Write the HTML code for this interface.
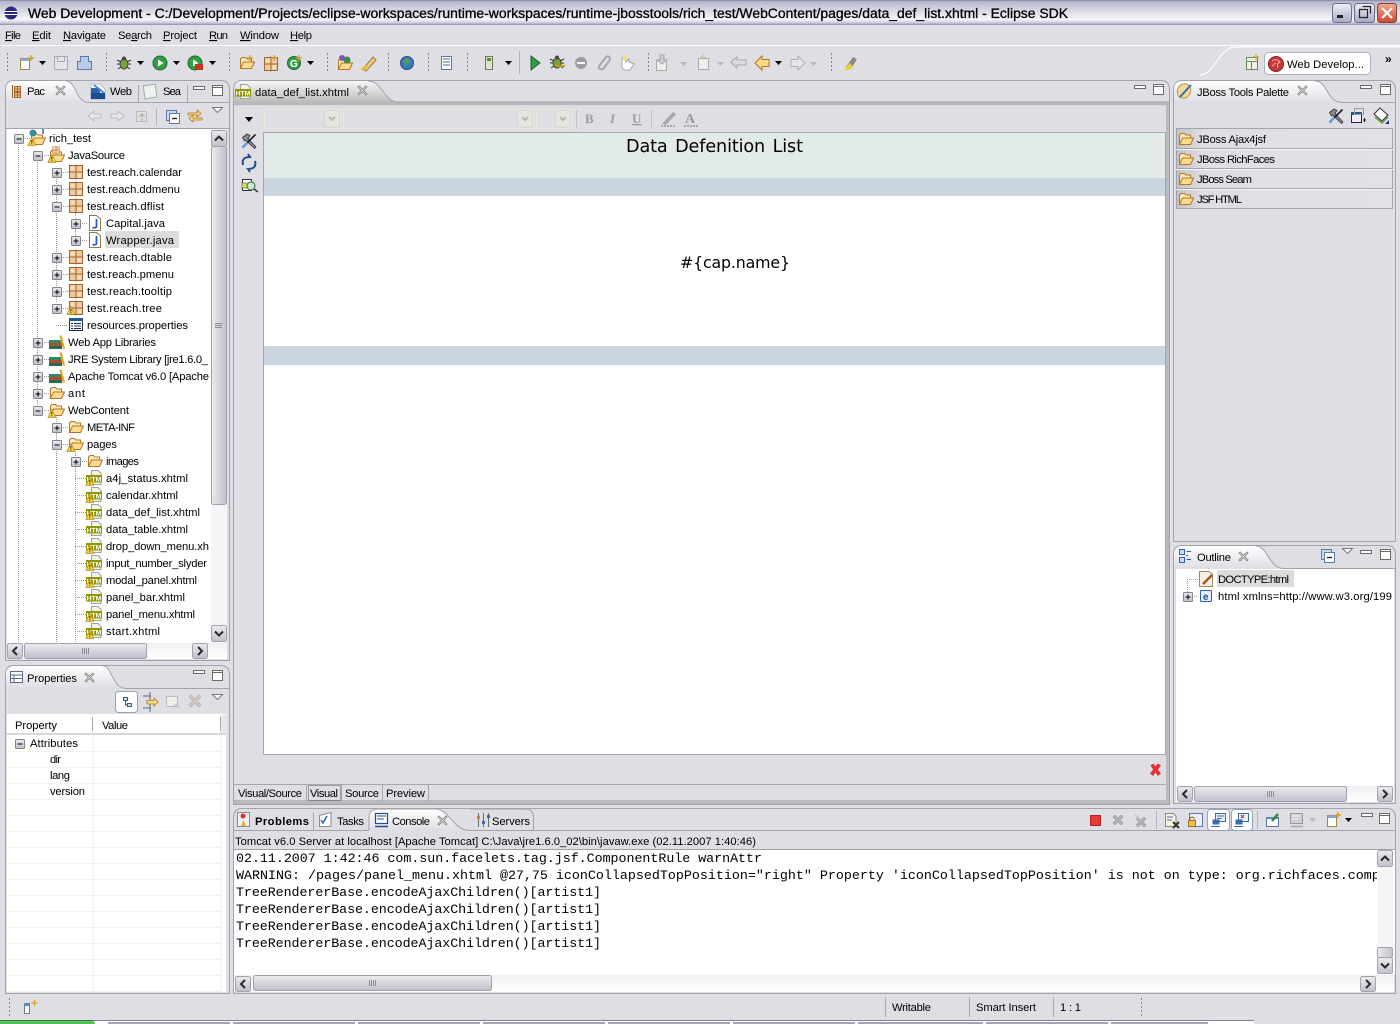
<!DOCTYPE html>
<html><head><meta charset="utf-8"><title>Eclipse SDK</title>
<style>
html,body{margin:0;padding:0;background:#dfdee4;overflow:hidden}
svg{display:block;position:absolute;left:0;top:0}
text{font-family:"Liberation Sans",sans-serif;font-size:11.2px;fill:#000;white-space:pre}
.m{font-family:"Liberation Mono",monospace;font-size:13.33px}
.d{font-family:"DejaVu Sans",sans-serif}
.b{font-weight:bold}
</style></head><body>
<svg width="1400" height="1024" viewBox="0 0 1400 1024">
<defs>
<linearGradient id="gT" x1="0" y1="0" x2="0" y2="1"><stop offset="0" stop-color="#7f7f9f"/><stop offset=".06" stop-color="#b5b5cc"/><stop offset=".3" stop-color="#cdcdde"/><stop offset=".78" stop-color="#f6f6fa"/><stop offset=".92" stop-color="#c8c8da"/><stop offset="1" stop-color="#8e8ea8"/></linearGradient>
<linearGradient id="gA" x1="0" y1="0" x2="0" y2="1"><stop offset="0" stop-color="#fff"/><stop offset="1" stop-color="#dfdee4"/></linearGradient>
<linearGradient id="gE" x1="0" y1="0" x2="0" y2="1"><stop offset="0" stop-color="#f6f6f6"/><stop offset="1" stop-color="#b9b9b9"/></linearGradient>
<linearGradient id="gH" x1="0" y1="0" x2="0" y2="1"><stop offset="0" stop-color="#ecebf0"/><stop offset="1" stop-color="#bfbfcb"/></linearGradient>
<linearGradient id="gV" x1="0" y1="0" x2="1" y2="0"><stop offset="0" stop-color="#ecebf0"/><stop offset="1" stop-color="#bfbfcb"/></linearGradient>
<linearGradient id="gTh" x1="0" y1="0" x2="0" y2="1"><stop offset="0" stop-color="#f0f0f3"/><stop offset="1" stop-color="#fff"/></linearGradient>
<linearGradient id="gP" x1="0" y1="0" x2="1" y2="0"><stop offset="0" stop-color="#c4c4c4"/><stop offset=".12" stop-color="#dfdee4"/><stop offset="1" stop-color="#e2e1e7"/></linearGradient>
<linearGradient id="gW" x1="0" y1="0" x2="0" y2="1"><stop offset="0" stop-color="#f0f0f6"/><stop offset="1" stop-color="#a8a8c4"/></linearGradient>
<linearGradient id="gR" x1="0" y1="0" x2="0" y2="1"><stop offset="0" stop-color="#f0a890"/><stop offset="1" stop-color="#d04830"/></linearGradient>

<g id="ep"><rect x=".5" y=".5" width="9" height="9" rx="1" fill="url(#gH)" stroke="#7f8590"/><path d="M2.500 5H7.500M5 2.500V7.500" stroke="#000" fill="none"/></g>
<g id="em"><rect x=".5" y=".5" width="9" height="9" rx="1" fill="url(#gH)" stroke="#7f8590"/><path d="M2.500 5H7.500" stroke="#000" fill="none"/></g>
<g id="warn"><path d="M3.800 0.500L7.800 8.300H0Z" fill="#ffd84a" stroke="#b08a10" stroke-width=".8"/><path d="M3.800 3V5.500M3.800 6.300V7.300" stroke="#222" fill="none"/></g>
<g id="pkg"><rect x="1.500" y="1.500" width="13" height="13" fill="#ecca9f" stroke="#a8642f"/><path d="M8 .5V15.500M.5 8H15.500" stroke="#a8642f" fill="none"/><path d="M3 3H6.500V6.500H3ZM9.500 9.500H13V13H9.500Z" fill="#f5ddbd"/></g>
<g id="fold"><path d="M1.500 13.500V4L3 2.500H6.500L8 4H12.500V6.500" fill="#fdeab8" stroke="#b5752a"/><path d="M1.500 13.500L4.500 7H15.500L12.500 13.500Z" fill="#fddc90" stroke="#b5752a"/></g>
<g id="htm"><path d="M5.500 .5H12L15 3.500V14.500H5.500Z" fill="#f4f4ee" stroke="#a0a0a0"/><rect x="0" y="5" width="16" height="7.500" fill="#8f9600"/><text x="8" y="11.300" text-anchor="middle" class="b" style="font-size:6.800px;fill:#fff">HTM</text></g>
<g id="java"><path d="M2.500 .5H9.500L13.500 4V15.500H2.500Z" fill="#fff" stroke="#8f7a50"/><path d="M9.500 4V11.500Q9.500 13 5.500 12.800" stroke="#2a60b8" stroke-width="1.800" fill="none"/></g>
<g id="lib"><rect x="0" y="6" width="13" height="3" fill="#2f8a68"/><rect x="0" y="9" width="13" height="3" fill="#a8502f"/><rect x="0" y="12" width="13" height="3" fill="#2a6a50"/><path d="M11.500 1.500L15 14.500" stroke="#e8a820" stroke-width="2.200" fill="none"/></g>
<g id="props"><rect x="1.500" y="1.500" width="13" height="12" fill="#fff" stroke="#1c2c48"/><rect x="1" y="1" width="14" height="3" fill="#24588e"/><path d="M3 6.500H5M6 6.500H13M3 9H5M6 9H13M3 11.500H5M6 11.500H13" stroke="#1c2c48" fill="none"/></g>
<g id="x"><path d="M1 2L2 1L5.500 4.500L9 1L10 2L6.500 5.500L10 9L9 10L5.500 6.500L2 10L1 9L4.500 5.500Z" fill="#fbfbfb" stroke="#8a8a8a" stroke-width=".9"/></g>
<g id="mn"><rect x=".5" y=".5" width="11" height="3" fill="#fff" stroke="#6a6a6a"/></g>
<g id="mx"><rect x=".5" y=".5" width="10" height="10" fill="#fff" stroke="#6a6a6a"/><path d="M.5 2.500H10.500" stroke="#6a6a6a"/></g>
<g id="vm"><path d="M.5 .5H10.500L5.500 5.500Z" fill="#fff" stroke="#7a7a7a"/></g>
<g id="arr"><path d="M0 0H7L3.500 4Z" fill="#000"/></g>
<g id="arg"><path d="M0 0H7L3.500 4Z" fill="#b8b8b8"/></g>
<g id="grip"><path d="M.5 0V20" stroke="#8a8678" stroke-dasharray="2 2" fill="none"/></g>
<g id="bU"><rect x=".5" y=".5" width="15" height="16" rx="2" fill="url(#gH)" stroke="#a2a2ae"/><path d="M4 10.500L8 6.500L12 10.500" stroke="#2a2a2a" stroke-width="2" fill="none"/></g>
<g id="bD"><rect x=".5" y=".5" width="15" height="16" rx="2" fill="url(#gH)" stroke="#a2a2ae"/><path d="M4 6.500L8 10.500L12 6.500" stroke="#2a2a2a" stroke-width="2" fill="none"/></g>
<g id="bL"><rect x=".5" y=".5" width="15" height="15" rx="2" fill="url(#gH)" stroke="#a2a2ae"/><path d="M10 4L6 8L10 12" stroke="#2a2a2a" stroke-width="2" fill="none"/></g>
<g id="bR"><rect x=".5" y=".5" width="15" height="15" rx="2" fill="url(#gH)" stroke="#a2a2ae"/><path d="M6 4L10 8L6 12" stroke="#2a2a2a" stroke-width="2" fill="none"/></g>
<g id="hg"><path d="M.5 0V6M2.500 0V6M4.500 0V6M6.500 0V6" stroke="#8a8a98" fill="none"/></g>
<g id="tools"><path d="M1.500 4.500L6 1L9 2.500L7 5.500L15 14L13.500 15.500L5 7.500L3.500 8Z" fill="#8a8a8e" stroke="#333" stroke-width=".8"/><path d="M14.500 1.500L6 10" stroke="#1a1a2a" stroke-width="1.600" fill="none"/><path d="M6.500 9.500L1.500 14.500" stroke="#5a9ad8" stroke-width="2.400" fill="none"/></g>
<g id="newf"><path d="M2.500 3.500H11.500V14.500H2.500Z" fill="#fff" stroke="#a08838"/><rect x="2.500" y="3.500" width="9" height="2.500" fill="#88a8d8"/><path d="M13 0V6M10 3H16" stroke="#d8a020" stroke-width="1.400" fill="none"/></g>
<g id="play"><circle cx="8" cy="8" r="7" fill="#30a040" stroke="#1a6a28"/><path d="M6 4.500L11.500 8L6 11.500Z" fill="#fff"/></g>
<g id="bug"><ellipse cx="8" cy="9" rx="4" ry="5" fill="#7aa040" stroke="#3c5a20"/><path d="M1 5L5 7M15 5L11 7M1 9H4M15 9H12M2 14L5 12M14 14L11 12" stroke="#333" fill="none"/><circle cx="8" cy="3.500" r="2" fill="#444"/></g>
</defs>

<!-- base -->
<rect width="1400" height="1024" fill="#dfdee4"/>
<rect width="1400" height="25" fill="url(#gT)"/>
<rect y="45" width="1400" height="1" fill="#fff"/>
<path d="M1200 75C1216 74 1218 47 1236 47H1400" fill="none" stroke="#fff" stroke-width="1.200"/>

<!-- title -->
<circle cx="11" cy="13" r="6.500" fill="#2c2a78"/><path d="M4.500 11.500H17.500M4.500 14.500H17.500" stroke="#fff"/>
<text x="28" y="18" textLength="1040" lengthAdjust="spacingAndGlyphs" style="font-size:13.5px;stroke:#000;stroke-width:.3">Web Development - C:/Development/Projects/eclipse-workspaces/runtime-workspaces/runtime-jbosstools/rich_test/WebContent/pages/data_def_list.xhtml - Eclipse SDK</text>
<rect x="1332.500" y="3.500" width="19" height="19" rx="3" fill="url(#gW)" stroke="#6e6e8c"/><rect x="1337" y="15" width="6" height="3" fill="#222"/>
<rect x="1354.500" y="3.500" width="20" height="19" rx="3" fill="url(#gW)" stroke="#6e6e8c"/><path d="M1362.500 6.500H1370.500V13.500M1359.500 9.500H1367.500V17.500H1359.500Z" fill="none" stroke="#222" stroke-width="1.200"/>
<rect x="1377.500" y="3.500" width="19" height="19" rx="3" fill="url(#gR)" stroke="#8a4030"/><path d="M1382 8L1392 18M1392 8L1382 18" stroke="#fff" stroke-width="2"/>

<!-- menu -->
<text x="5" y="39" textLength="16"><tspan text-decoration="underline">F</tspan>ile</text>
<text x="32" y="39" textLength="19"><tspan text-decoration="underline">E</tspan>dit</text>
<text x="63" y="39" textLength="43"><tspan text-decoration="underline">N</tspan>avigate</text>
<text x="118" y="39" textLength="34">Se<tspan text-decoration="underline">a</tspan>rch</text>
<text x="163" y="39" textLength="34"><tspan text-decoration="underline">P</tspan>roject</text>
<text x="209" y="39" textLength="19"><tspan text-decoration="underline">R</tspan>un</text>
<text x="240" y="39" textLength="39"><tspan text-decoration="underline">W</tspan>indow</text>
<text x="290" y="39" textLength="22"><tspan text-decoration="underline">H</tspan>elp</text>

<!-- toolbar -->
<use href="#grip" x="7" y="53"/><use href="#grip" x="106" y="53"/><use href="#grip" x="229" y="53"/><use href="#grip" x="327" y="53"/><use href="#grip" x="388" y="53"/><use href="#grip" x="428" y="53"/><use href="#grip" x="467" y="53"/><use href="#grip" x="648" y="53"/><use href="#grip" x="831" y="53"/>
<path d="M519.500 51V74" stroke="#b0b0b8"/>
<use href="#newf" x="18" y="55"/><use href="#arr" x="39" y="61"/>
<g fill="#e6e6ea" stroke="#a8a8b0"><rect x="54.500" y="56.500" width="13" height="13"/><rect x="57.500" y="56.500" width="7" height="5"/></g>
<path d="M80.500 56.500H88.500V61.500H91.500V69.500H77.500V61.500H80.500Z" fill="#b8cce8" stroke="#5a7aa8"/>
<use href="#bug" x="116" y="55"/><use href="#arr" x="137" y="61"/>
<use href="#play" x="152" y="55"/><use href="#arr" x="173" y="61"/>
<use href="#play" x="187" y="55"/><rect x="195" y="64" width="8" height="6" fill="#c83020"/><use href="#arr" x="209" y="61"/>
<use href="#fold" x="239" y="55"/><path d="M250 55V61M247 58H253" stroke="#d8a020" stroke-width="1.300"/>
<use href="#pkg" x="263" y="56"/><path d="M274 55V61M271 58H277" stroke="#d8a020" stroke-width="1.300"/>
<circle cx="294" cy="63" r="6.500" fill="#38a048" stroke="#1a6a28"/><text x="290" y="67" class="b" style="font-size:10px;fill:#fff">G</text><path d="M299 55V61M296 58H302" stroke="#d8a020" stroke-width="1.300"/><use href="#arr" x="307" y="61"/>
<use href="#fold" x="337" y="56"/><circle cx="347" cy="60" r="3.500" fill="#3a8a4a"/><circle cx="342" cy="58" r="3" fill="#7a5aa8"/>
<path d="M363 69L373 57L376 60L366 71Z" fill="#f0c890" stroke="#a07840"/><path d="M362 70L366 66" stroke="#e0c020" stroke-width="3"/>
<circle cx="407" cy="63" r="6.500" fill="#3a7ac0" stroke="#2a4a80"/><path d="M403 60Q407 57 410 61L406 66Z" fill="#58a048"/>
<path d="M441.500 56.500H451.500V69.500H441.500Z" fill="#fff" stroke="#5a7aa8"/><path d="M443 59H450M443 62H450M443 65H450" stroke="#4a6a98"/>
<rect x="485.500" y="56.500" width="7" height="13" fill="#dce4c8" stroke="#6a7a5a"/><rect x="487" y="58" width="4" height="3" fill="#5a8a3a"/><use href="#arr" x="505" y="61"/>
<path d="M531 56L540 63L531 70Z" fill="#2f9a48" stroke="#1a6a28"/>
<use href="#bug" x="549" y="54"/><path d="M556 66H565" stroke="#c89820" stroke-width="2"/>
<circle cx="581" cy="63" r="6" fill="#9c9ca4"/><rect x="577" y="62" width="8" height="2" fill="#fff"/>
<g fill="none" stroke="#a8a8b0" stroke-width="2"><path d="M599 66L606 57Q610 55 610 60L603 69Q598 70 599 66Z"/></g>
<path d="M622 58V68Q625 71 630 70L634 64L629 62V59L626 62V56Z" fill="#fff" stroke="#a8a8a8"/><circle cx="625" cy="58" r="2.500" fill="#f4e070"/>
<path d="M656.500 60.500H666.500V70.500H656.500Z" fill="#eee" stroke="#aaa"/><path d="M660 55H664V60H667L662 64L657 60H660Z" fill="#ccc" stroke="#aaa"/><use href="#arg" x="680" y="62"/>
<path d="M698.500 58.500H708.500V69.500H698.500Z" fill="#eee" stroke="#aaa"/><path d="M703 54V60M700 57H706" stroke="#c8c8a0"/><use href="#arg" x="717" y="62"/>
<path d="M731 62L737 57V60H746V65H737V68Z" fill="#ddd" stroke="#a8a8a8"/>
<path d="M755 63L762 56V59.500H769V66.500H762V70Z" fill="#fcd88a" stroke="#b07820"/><use href="#arr" x="775" y="61"/>
<path d="M805 63L798 56V59.500H791V66.500H798V70Z" fill="#e6e6e6" stroke="#b0b0b0"/><use href="#arg" x="810" y="62"/>
<path d="M846 67L853 57L857 59L851 69Z" fill="#908878"/><path d="M844 70L850 63L853 67L848 70Z" fill="#f0d030"/>

<!-- perspective -->
<path d="M1246.500 57.500H1257.500V69.500H1246.500ZM1246.500 61.500H1257.500M1251.500 61.500V69.500" fill="#f0f0e0" stroke="#6a8a5a"/><path d="M1256 54V60M1253 57H1259" stroke="#d8a020" stroke-width="1.200"/>
<rect x="1264.500" y="52.500" width="106" height="22" rx="4" fill="#fff" stroke="#a8b4c4"/>
<circle cx="1276" cy="64" r="7.500" fill="#c83838" stroke="#8a2020"/><path d="M1272 61Q1276 58 1280 62Q1276 64 1278 68M1272 66L1276 63" fill="none" stroke="#f0b0b0"/>
<text x="1287" y="68" textLength="77">Web Develop...</text>
<text x="1385" y="63" class="b" style="font-size:12px">»</text>

<!-- left-top panel -->
<path d="M5.500 90Q5.500 80.500 14 80.500H221Q229.500 80.500 229.500 90V660.500H5.500Z" fill="#dfdee4" stroke="#a2a2aa"/>
<path d="M6 102V90Q6 81 14 81H66C76 81 76 102 88 102Z" fill="url(#gA)"/>
<path d="M66 81C76 81 76 102 88 102.500H229" fill="none" stroke="#a2a2aa"/>
<path d="M12.500 85V98" stroke="#8a6030" fill="none"/><path d="M14.500 86.500H20.500V91.500H14.500ZM14.500 92.500H20.500V97.500H14.500ZM14.500 89H20.500M14.500 95H20.500M17.500 86.500V97.500" fill="#ecca9f" stroke="#a8642f"/>
<text x="27" y="95" textLength="18">Pac</text><use href="#x" x="55" y="85"/>
<path d="M91 84H100L105 89V99H91Z" fill="#fff" stroke="#8a98a8" stroke-width=".6"/><rect x="91" y="88" width="9" height="5" fill="#2a66b0"/><rect x="91" y="93" width="14" height="6" fill="#1a4c90"/><path d="M94 85L104 93" stroke="#4a8ad0" stroke-width="2"/>
<text x="110" y="95" textLength="22">Web</text>
<path d="M138.500 85V102" stroke="#a8a8b0"/>
<rect x="144" y="85" width="12" height="13" fill="#eef2ee" stroke="#a0b0a0" transform="rotate(-8 150 91)"/><text x="163" y="95" textLength="18">Sea</text>
<path d="M187.500 85V102" stroke="#a8a8b0"/>
<use href="#mn" x="193" y="86"/><use href="#mx" x="212" y="85"/>
<path d="M88 116L94 111V114H101V118H94V121Z" fill="#e8e8e8" stroke="#bbb"/>
<path d="M124 116L118 111V114H111V118H118V121Z" fill="#e8e8e8" stroke="#bbb"/>
<path d="M136.500 111.500H146.500V121.500H136.500Z" fill="#e0e0e0" stroke="#bbb"/><path d="M139 117L142 114L145 117M142 114V121" stroke="#aaa" fill="none"/>
<path d="M156.500 108V125" stroke="#b4b4bc"/>
<rect x="166.500" y="110.500" width="10" height="10" fill="#c8d8ec" stroke="#5a7aa8"/><rect x="169.500" y="113.500" width="10" height="10" fill="#fff" stroke="#5a7aa8"/><path d="M172 118.500H177" stroke="#223" stroke-width="1.400"/>
<path d="M188 113H197V110L201 113.500L197 117V115H188Z" fill="#fcd88a" stroke="#b07820" stroke-width=".8"/><path d="M202 118H193V115L189 118.500L193 122V120H202Z" fill="#fcd88a" stroke="#b07820" stroke-width=".8"/>
<use href="#vm" x="212" y="107"/>

<rect x="6" y="128" width="223" height="1" fill="#a2a2aa"/>
<rect x="7" y="129" width="204" height="514" fill="#fff"/>
<rect x="105" y="231" width="74" height="17" fill="#dcdcdc"/>
<!-- tree dotted -->
<g stroke="#9a9a9a" stroke-dasharray="1 1" fill="none">
<path d="M18.500 143V642M37.500 160V405M56.500 177V303M75.500 211V236M56.500 415V642M75.500 449V642"/>
<path d="M23 138.500H30M42 155.500H49M61 172.500H68M61 189.500H68M61 206.500H68M80 223.500H87M80 240.500H87M61 257.500H68M61 274.500H68M61 291.500H68M61 308.500H68M56 325.500H68M42 342.500H49M42 359.500H49M42 376.500H49M42 393.500H49M42 410.500H49M61 427.500H68M61 444.500H68M80 461.500H87M75 478.500H87M75 495.500H87M75 512.500H87M75 529.500H87M75 546.500H87M75 563.500H87M75 580.500H87M75 597.500H87M75 614.500H87M75 631.500H87"/>
</g>
<!-- expanders -->
<use href="#em" x="14" y="134"/><use href="#em" x="33" y="151"/>
<use href="#ep" x="52" y="168"/><use href="#ep" x="52" y="185"/><use href="#em" x="52" y="202"/>
<use href="#ep" x="71" y="219"/><use href="#ep" x="71" y="236"/>
<use href="#ep" x="52" y="253"/><use href="#ep" x="52" y="270"/><use href="#ep" x="52" y="287"/><use href="#ep" x="52" y="304"/>
<use href="#ep" x="33" y="338"/><use href="#ep" x="33" y="355"/><use href="#ep" x="33" y="372"/><use href="#ep" x="33" y="389"/><use href="#em" x="33" y="406"/>
<use href="#ep" x="52" y="423"/><use href="#em" x="52" y="440"/><use href="#ep" x="71" y="457"/>
<!-- tree icons -->
<use href="#fold" x="30" y="131"/><circle cx="33" cy="133" r="3.500" fill="#3a8a9a"/><path d="M43 129V134" stroke="#2a60b8" stroke-width="1.500"/><use href="#warn" x="28" y="137"/>
<use href="#fold" x="49" y="148"/><use href="#pkg" x="52" y="146" transform="translate(26,73) scale(.5)"/><use href="#warn" x="48" y="154"/>
<use href="#pkg" x="68" y="164"/><use href="#pkg" x="68" y="181"/><use href="#pkg" x="68" y="198"/>
<use href="#java" x="87" y="215"/><use href="#java" x="87" y="232"/>
<use href="#pkg" x="68" y="249"/><use href="#pkg" x="68" y="266"/><use href="#pkg" x="68" y="283"/><use href="#pkg" x="68" y="300"/><use href="#warn" x="67" y="306"/>
<use href="#props" x="68" y="317"/>
<use href="#lib" x="49" y="334"/><use href="#lib" x="49" y="351"/><use href="#lib" x="49" y="368"/>
<use href="#fold" x="49" y="385"/><use href="#fold" x="49" y="402"/><use href="#warn" x="48" y="409"/>
<use href="#fold" x="68" y="419"/><use href="#fold" x="68" y="436"/><use href="#warn" x="67" y="443"/>
<use href="#fold" x="87" y="453"/>
<use href="#htm" x="86" y="470"/><use href="#warn" x="86" y="477"/>
<use href="#htm" x="86" y="487"/><use href="#warn" x="86" y="494"/>
<use href="#htm" x="86" y="504"/><use href="#warn" x="86" y="511"/>
<use href="#htm" x="86" y="521"/>
<use href="#htm" x="86" y="538"/><use href="#warn" x="86" y="545"/>
<use href="#htm" x="86" y="555"/><use href="#warn" x="86" y="562"/>
<use href="#htm" x="86" y="572"/><use href="#warn" x="86" y="579"/>
<use href="#htm" x="86" y="589"/>
<use href="#htm" x="86" y="606"/><use href="#warn" x="86" y="613"/>
<use href="#htm" x="86" y="623"/><use href="#warn" x="86" y="630"/>
<!-- tree text -->
<text x="49" y="142" textLength="42">rich_test</text>
<text x="68" y="159" textLength="57">JavaSource</text>
<text x="87" y="176" textLength="95">test.reach.calendar</text>
<text x="87" y="193" textLength="93">test.reach.ddmenu</text>
<text x="87" y="210" textLength="77">test.reach.dflist</text>
<text x="106" y="227" textLength="59">Capital.java</text>
<text x="106" y="244" textLength="68">Wrapper.java</text>
<text x="87" y="261" textLength="85">test.reach.dtable</text>
<text x="87" y="278" textLength="87">test.reach.pmenu</text>
<text x="87" y="295" textLength="85">test.reach.tooltip</text>
<text x="87" y="312" textLength="75">test.reach.tree</text>
<text x="87" y="329" textLength="101">resources.properties</text>
<text x="68" y="346" textLength="88">Web App Libraries</text>
<text x="68" y="363" textLength="140">JRE System Library [jre1.6.0_</text>
<text x="68" y="380" textLength="141">Apache Tomcat v6.0 [Apache</text>
<text x="68" y="397" textLength="17">ant</text>
<text x="68" y="414" textLength="61">WebContent</text>
<text x="87" y="431" textLength="48">META-INF</text>
<text x="87" y="448" textLength="30">pages</text>
<text x="106" y="465" textLength="33">images</text>
<text x="106" y="482" textLength="82">a4j_status.xhtml</text>
<text x="106" y="499" textLength="72">calendar.xhtml</text>
<text x="106" y="516" textLength="94">data_def_list.xhtml</text>
<text x="106" y="533" textLength="82">data_table.xhtml</text>
<text x="106" y="550" textLength="103">drop_down_menu.xh</text>
<text x="106" y="567" textLength="101">input_number_slyder</text>
<text x="106" y="584" textLength="91">modal_panel.xhtml</text>
<text x="106" y="601" textLength="79">panel_bar.xhtml</text>
<text x="106" y="618" textLength="89">panel_menu.xhtml</text>
<text x="106" y="635" textLength="54">start.xhtml</text>
<!-- left scrollbars -->
<rect x="209" y="129" width="2" height="514" fill="#fff"/>
<rect x="211" y="129" width="16" height="514" fill="#f5f5f8"/>
<rect x="227" y="129" width="2" height="514" fill="#dfdee4"/>
<use href="#bU" x="211" y="130"/><use href="#bD" x="211" y="625"/>
<rect x="211.500" y="146.500" width="15" height="358" rx="2" fill="url(#gV)" stroke="#a2a2ae"/>
<path d="M215 323.500H222M215 325.500H222M215 327.500H222" stroke="#8a8a98"/>
<rect x="7" y="643" width="220" height="16" fill="url(#gTh)"/>
<use href="#bL" x="7" y="643"/><use href="#bR" x="192" y="643"/>
<rect x="24.500" y="643.500" width="122" height="15" rx="2" fill="url(#gH)" stroke="#a2a2ae"/><use href="#hg" x="82" y="648"/>

<!-- properties -->
<path d="M5.500 675Q5.500 665.500 14 665.500H221Q229.500 665.500 229.500 675V993.500H5.500Z" fill="#dfdee4" stroke="#a2a2aa"/>
<path d="M6 688V675Q6 666 14 666H103C112 666 112 688 126 688Z" fill="url(#gA)"/>
<path d="M103 666C112 666 112 688 126 688.500H229" fill="none" stroke="#a2a2aa"/>
<rect x="10.500" y="671.500" width="12" height="11" fill="#fff" stroke="#5a6a8a"/><path d="M10 675H22M14 675V682M10 678.500H22" stroke="#5a6a8a"/>
<text x="27" y="682" textLength="50">Properties</text><use href="#x" x="84" y="672"/>
<use href="#mn" x="193" y="670"/><use href="#mx" x="212" y="670"/>
<rect x="115.500" y="691.500" width="22" height="21" rx="3" fill="#fff" stroke="#90a4b8"/>
<path d="M123.500 697.500H127.500V700.500H123.500ZM127.500 703.500H131.500V706.500H127.500ZM125.500 700.500V705H127.500" fill="#cde" stroke="#3a5a88"/>
<path d="M143 696H151M143 708H151M150 692V700M150 704V712" stroke="#5a6a7a" fill="none"/><path d="M147 700.500H154V698L158 702L154 706V704H147Z" fill="#fcd88a" stroke="#b07820" stroke-width=".8"/>
<rect x="166.500" y="696.500" width="11" height="10" fill="#eee" stroke="#bbb"/><path d="M172 707L176 704L179 708" stroke="#bbb" fill="none"/>
<path d="M189 697L191 695L195 699L199 695L201 697L197 701L201 705L199 707L195 703L191 707L189 705L193 701Z" fill="#cfc8c8" stroke="#b8a8a8" stroke-width=".7"/>
<use href="#vm" x="212" y="694"/>
<rect x="7" y="714" width="219" height="278" fill="#fff"/>
<rect x="7" y="715" width="215" height="18" fill="#fff"/><rect x="7" y="733" width="219" height="2" fill="#d8d8d8"/>
<rect x="221" y="715" width="6" height="18" fill="#e6e6ea"/>
<path d="M92.500 717V731M220.500 717V731" stroke="#a8a8b0"/>
<text x="15" y="729" textLength="42">Property</text><text x="102" y="729" textLength="26">Value</text>
<g stroke="#f4f4e6" fill="none">
<path d="M93.500 735V992M221.500 735V992"/>
<path d="M7 751.500H221M7 767.500H221M7 783.500H221M7 799.500H221M7 815.500H221M7 831.500H221M7 847.500H221M7 863.500H221M7 879.500H221M7 895.500H221M7 911.500H221M7 927.500H221M7 943.500H221M7 959.500H221M7 975.500H221M7 991.500H221"/>
</g>
<use href="#em" x="15" y="739"/>
<text x="30" y="747" textLength="48">Attributes</text><text x="50" y="763" textLength="11">dir</text><text x="50" y="779" textLength="20">lang</text><text x="50" y="795" textLength="35">version</text>

<!-- editor -->
<path d="M233.500 90Q233.500 80.500 242 80.500H1161Q1169.500 80.500 1169.500 90V804.500H233.500Z" fill="#dfdee4" stroke="#a2a2aa"/>
<path d="M234 103V90Q234 81 242 81H368C382 81 384 102 398 102Z" fill="url(#gE)"/>
<rect x="234" y="102" width="935" height="3" fill="#b9b9b9"/>
<rect x="234" y="105" width="935" height="1" fill="#d8d8dc"/>
<path d="M368 81C382 81 384 102 398 102H1169" fill="none" stroke="#a2a2aa"/>
<use href="#htm" x="235" y="84"/>
<text x="255" y="96" textLength="94">data_def_list.xhtml</text><use href="#x" x="357" y="85"/>
<use href="#mn" x="1134" y="85"/><use href="#mx" x="1153" y="84"/>
<rect x="1166" y="105" width="3" height="699" fill="#b9b9bd"/>
<rect x="234" y="800" width="935" height="4" fill="#b9b9bd"/>
<path d="M245 117H253L249 122Z" fill="#000"/>
<use href="#tools" x="241" y="133"/>
<g fill="none" stroke="#1f4f90" stroke-width="2"><path d="M243 165Q241 157 250 157L248 154"/><path d="M255 161Q257 169 248 169L250 172"/></g>
<rect x="242.500" y="179.500" width="9" height="11" fill="#fff" stroke="#333"/><rect x="242" y="183" width="6" height="5" fill="#e8e030" stroke="#2a60b8" stroke-width=".6"/><circle cx="251" cy="186" r="4" fill="#cfe8c8" stroke="#2a6a60"/><path d="M254 189L258 192" stroke="#333" stroke-width="1.500"/>
<!-- combos -->
<g fill="#dfdee4" stroke="#ece9d8"><rect x="264.500" y="109.500" width="76" height="19"/><rect x="343.500" y="109.500" width="190" height="19"/><rect x="536.500" y="109.500" width="35" height="19"/></g>
<g fill="#e6e5e0" stroke="#d8d6c8"><rect x="324.500" y="110.500" width="15" height="17" rx="2"/><rect x="517.500" y="110.500" width="15" height="17" rx="2"/><rect x="555.500" y="110.500" width="15" height="17" rx="2"/></g>
<path d="M329 117L332 120L335 117M522 117L525 120L528 117M560 117L563 120L566 117" fill="none" stroke="#b8b8b0" stroke-width="2"/>
<path d="M576.500 110V129M651.500 110V129" stroke="#c4c4cc"/>
<text x="585" y="123" class="b" style="font-size:13px;fill:#9a9aa0;font-family:'Liberation Serif',serif">B</text>
<text x="610" y="123" class="b" style="font-size:13px;fill:#9a9aa0;font-style:italic;font-family:'Liberation Serif',serif">I</text>
<text x="632" y="123" class="b" style="font-size:13px;fill:#9a9aa0;font-family:'Liberation Serif',serif" text-decoration="underline">U</text>
<path d="M662 124L673 112L676 114L666 125Z" fill="#a8a8a8"/><path d="M661 126H676" stroke="#a8a8a8" stroke-dasharray="2 1" stroke-width="2"/>
<text x="685" y="123" class="b" style="font-size:14px;fill:#9a9aa0;font-family:'Liberation Serif',serif">A</text><path d="M684 126H698" stroke="#a8a8a8" stroke-dasharray="2 1" stroke-width="2"/>
<!-- design -->
<rect x="263.500" y="132.500" width="902" height="622" fill="#fff" stroke="#a8a8ac"/>
<rect x="264" y="133" width="901" height="45" fill="#e2ebe9"/>
<rect x="264" y="178" width="901" height="18" fill="#c9d5df"/>
<rect x="264" y="346" width="901" height="19" fill="#c9d5df"/>
<text x="714.500" y="152" text-anchor="middle" class="d" textLength="177" style="font-size:17.600px" word-spacing="2">Data Defenition List</text>
<text x="680" y="268" class="d" textLength="110" style="font-size:15.800px">#{cap.name}</text>
<path d="M1151 765.500L1153 764L1155.500 767L1158 764L1160.500 765.500L1157.500 769.500L1160.500 773.500L1158 775.500L1155.500 772L1153 775.500L1150.500 773.500L1153.500 769.500Z" fill="#ee3038" stroke="#d02028" stroke-width=".6"/>
<path d="M234 784.500H1166" stroke="#a8a8ac"/>
<path d="M306.500 785V801M341.500 785V801M382.500 785V801M428.500 785V801" stroke="#a8a8ac"/>
<text x="238" y="797" textLength="64">Visual/Source</text>
<rect x="308.500" y="785.500" width="32" height="15" fill="none" stroke="#555" stroke-dasharray="1 1"/>
<text x="310" y="797" textLength="28">Visual</text><text x="345" y="797" textLength="34">Source</text><text x="386" y="797" textLength="39">Preview</text>

<!-- palette -->
<path d="M1173.500 90Q1173.500 80.500 1182 80.500H1387Q1395.500 80.500 1395.500 90V541.500H1173.500Z" fill="#dfdee4" stroke="#a2a2aa"/>
<path d="M1174 102V90Q1174 81 1182 81H1315C1328 81 1326 102 1342 102Z" fill="url(#gA)"/>
<path d="M1315 81C1328 81 1326 102 1342 102.500H1395" fill="none" stroke="#a2a2aa"/>
<ellipse cx="1184" cy="91" rx="6.500" ry="7.500" fill="#f0d898" stroke="#b89850" transform="rotate(30 1184 91)"/><path d="M1180 97L1191 85" stroke="#3a6ab0" stroke-width="2"/>
<text x="1197" y="96" textLength="92">JBoss Tools Palette</text><use href="#x" x="1297" y="85"/>
<use href="#mn" x="1360" y="85"/><use href="#mx" x="1380" y="84"/>
<use href="#tools" x="1328" y="108"/>
<rect x="1351.500" y="112.500" width="10" height="10" fill="#eef" stroke="#223"/><rect x="1351" y="112" width="11" height="3" fill="#24588e"/><rect x="1354.500" y="108.500" width="9" height="6" fill="none" stroke="#999"/><path d="M1363 120H1366M1364.500 118V122" stroke="#222"/>
<path d="M1374 114L1380 108L1388 115L1382 121Z" fill="#fff" stroke="#2a2a2a"/><path d="M1375 117L1382 123L1388 117" stroke="#6a9a40" stroke-width="1.500" fill="none"/><path d="M1385 124H1389V120Z" fill="#1a30a0"/>
<g stroke="#9a9aa2"><rect x="1176.500" y="128.500" width="216" height="80" fill="#dfdee4"/></g>
<rect x="1177" y="129" width="215" height="79" fill="url(#gP)"/>
<path d="M1176 128.500H1393M1176 148.500H1393M1176 168.500H1393M1176 188.500H1393M1176 208.500H1393M1176.500 128V209M1392.500 128V209" stroke="#a2a2aa"/>
<path d="M1176 149.500H1393M1176 169.500H1393M1176 189.500H1393" stroke="#f6f6f8"/>
<use href="#fold" x="1178" y="131"/><use href="#fold" x="1178" y="151"/><use href="#fold" x="1178" y="171"/><use href="#fold" x="1178" y="191"/>
<text x="1197" y="143" textLength="69">JBoss Ajax4jsf</text><text x="1197" y="163" textLength="78">JBoss RichFaces</text><text x="1197" y="183" textLength="55">JBoss Seam</text><text x="1197" y="203" textLength="45">JSF HTML</text>

<!-- outline -->
<path d="M1173.500 555Q1173.500 545.500 1182 545.500H1387Q1395.500 545.500 1395.500 555V803.500H1173.500Z" fill="#dfdee4" stroke="#a2a2aa"/>
<path d="M1174 568V555Q1174 546 1182 546H1256C1268 546 1268 568 1284 568Z" fill="url(#gA)"/>
<path d="M1256 546C1268 546 1268 568 1284 568.500H1395" fill="none" stroke="#a2a2aa"/>
<path d="M1179.500 549.500H1184.500V554.500H1179.500ZM1179.500 557.500H1184.500V562.500H1179.500ZM1186.500 551.500H1191M1186.500 559.500H1191M1186 555.500H1188" fill="#cde" stroke="#2a60b8"/>
<text x="1197" y="561" textLength="34">Outline</text><use href="#x" x="1238" y="551"/>
<rect x="1321.500" y="549.500" width="10" height="10" fill="#c8d8ec" stroke="#5a7aa8"/><rect x="1324.500" y="552.500" width="10" height="10" fill="#fff" stroke="#5a7aa8"/><path d="M1327 557.500H1332" stroke="#223" stroke-width="1.400"/>
<use href="#vm" x="1342" y="548"/><use href="#mn" x="1360" y="550"/><use href="#mx" x="1380" y="549"/>
<rect x="1176" y="569" width="218" height="233" fill="#fff"/>
<rect x="1217" y="570" width="77" height="17" fill="#dcdcdc"/>
<g stroke="#9a9a9a" stroke-dasharray="1 1" fill="none"><path d="M1187.500 579V592M1187 579.500H1198M1192 596.500H1198"/></g>
<path d="M1199.500 571.500H1209L1212.500 574V586.500H1199.500Z" fill="#f6f0e0" stroke="#a08858"/><path d="M1203 584L1212 575" stroke="#a85020" stroke-width="2.500"/>
<use href="#ep" x="1183" y="592"/>
<rect x="1200.500" y="590.500" width="11" height="11" rx="1" fill="#e6eef8" stroke="#2a60a8"/><text x="1203" y="600" class="b" style="font-size:10px;fill:#1c4c98">e</text>
<text x="1218" y="583" textLength="71">DOCTYPE:html</text>
<text x="1218" y="600" textLength="174">html xmlns=http://www.w3.org/199</text>
<rect x="1176" y="786" width="218" height="16" fill="url(#gTh)"/>
<use href="#bL" x="1177" y="786"/><use href="#bR" x="1377" y="786"/>
<rect x="1194.500" y="786.500" width="152" height="15" rx="2" fill="url(#gH)" stroke="#a2a2ae"/><use href="#hg" x="1267" y="791"/>

<!-- console -->
<path d="M233.500 818Q233.500 808.500 242 808.500H1387Q1395.500 808.500 1395.500 818V993.500H233.500Z" fill="#dfdee4" stroke="#a2a2aa"/>
<path d="M369 830V818Q369 809 378 809H435C450 809 452 830 470 830Z" fill="url(#gA)"/>
<path d="M234 830.500H369M369 830V818Q369 809 378 809H435C450 809 452 830 470 830.500H1395" fill="none" stroke="#a2a2aa"/>
<path d="M313.500 812V830" stroke="#a8a8b0"/>
<path d="M533.500 830V818Q533.500 809 525 809H470" fill="none" stroke="#a2a2aa"/>
<rect x="237.500" y="812.500" width="12" height="14" fill="#f2f2f2" stroke="#8a8a8a"/><circle cx="243" cy="816" r="2.500" fill="#d83030"/><path d="M241 826L243.500 820L246 826Z" fill="#f0b020"/>
<text x="255" y="825" class="b" textLength="54">Problems</text>
<path d="M319.500 815.500L331 812.500V826.500H319.500Z" fill="#fff" stroke="#8a8a90"/><path d="M321 820L323 823L327 816" stroke="#2a60c8" stroke-width="1.500" fill="none"/>
<text x="337" y="825" textLength="27">Tasks</text>
<rect x="375.500" y="813.500" width="12" height="10" fill="#fff" stroke="#1c4c90" stroke-width="1.200"/><path d="M377 816H386M377 819H384" stroke="#1c4c90"/><path d="M375 826.500H388" stroke="#1c4c90" stroke-width="1.500"/>
<text x="392" y="825" textLength="38">Console</text><use href="#x" x="437" y="815"/>
<path d="M478.500 813V827M483.500 813V827M488.500 813V827" stroke="#5a7a5a"/><rect x="477" y="816" width="3" height="3" fill="#d08030"/><rect x="482" y="821" width="3" height="3" fill="#3a6ab0"/><rect x="487" y="815" width="3" height="3" fill="#3a6ab0"/>
<text x="492" y="825" textLength="38">Servers</text>
<rect x="1090.500" y="815.500" width="10" height="10" fill="#e83838" stroke="#b02020"/>
<path d="M1113 817L1115 815L1118 818L1121 815L1123 817L1120 820L1123 823L1121 825L1118 822L1115 825L1113 823L1116 820Z" fill="#b0b0b4" stroke="#a0a0a4" stroke-width=".6"/>
<path d="M1136 819L1138 817L1141 820L1144 817L1146 819L1143 822L1146 825L1144 827L1141 824L1138 827L1136 825L1139 822Z" fill="#b0b0b4" stroke="#a0a0a4" stroke-width=".6"/><path d="M1135 815L1141 820" stroke="#c4c4c8" stroke-width="2"/>
<path d="M1156.500 811V829M1257.500 811V829" stroke="#b4b4bc"/>
<path d="M1165.500 813.500H1173L1176 816V826.500H1165.500Z" fill="#f6f2e4" stroke="#8a8a7a"/><path d="M1167 817H1173M1167 820H1172" stroke="#5a6a8a"/><path d="M1173 822L1179 828M1179 822L1173 828" stroke="#333" stroke-width="2"/>
<rect x="1189.500" y="813.500" width="13" height="13" fill="#eef" stroke="#5a7aa0"/><rect x="1188.500" y="820.500" width="7" height="6" fill="#f0c040" stroke="#a07820"/><path d="M1190 820V818Q1192 816 1194 818V820" stroke="#8a6a20" fill="none"/>
<rect x="1207.500" y="809.500" width="22" height="21" rx="3" fill="#fff" stroke="#90a4b8"/><rect x="1231.500" y="809.500" width="21" height="21" rx="3" fill="#fff" stroke="#90a4b8"/>
<rect x="1215.500" y="813.500" width="10" height="8" fill="#eaf0fa" stroke="#3a6ab0"/><path d="M1217 816H1224M1217 818.500H1222" stroke="#3a6ab0"/><rect x="1212.500" y="819.500" width="7" height="5" fill="#3a6ab0"/><path d="M1211 826.500H1220" stroke="#3a6ab0"/>
<rect x="1238.500" y="813.500" width="10" height="8" fill="#eaf0fa" stroke="#3a6ab0"/><path d="M1241 815L1244 818M1244 815L1241 818" stroke="#d02020"/><rect x="1235.500" y="819.500" width="7" height="5" fill="#3a6ab0"/><path d="M1234 826.500H1243" stroke="#3a6ab0"/>
<rect x="1266.500" y="817.500" width="12" height="9" fill="#fff" stroke="#5a7aa0"/><rect x="1266" y="817" width="12" height="2" fill="#5a8ac0"/><path d="M1272 821L1278 814" stroke="#3a8a3a" stroke-width="2.500"/>
<rect x="1290.500" y="813.500" width="12" height="10" fill="#d0d0d4" stroke="#9a9a9e"/><path d="M1292 816H1300M1292 819H1298" stroke="#f0f0f0"/><path d="M1291 826.500H1303" stroke="#a8a8ac" stroke-width="1.500"/>
<use href="#arg" x="1309" y="818"/>
<use href="#newf" x="1325" y="812"/><use href="#arr" x="1345" y="818"/>
<use href="#mn" x="1361" y="813"/><use href="#mx" x="1379" y="813"/>
<text x="235" y="845" textLength="521">Tomcat v6.0 Server at localhost [Apache Tomcat] C:\Java\jre1.6.0_02\bin\javaw.exe (02.11.2007 1:40:46)</text>
<path d="M234 849.500H1395" stroke="#a2a2aa"/>
<rect x="234" y="850" width="1160" height="125" fill="#fff"/>
<text x="236" y="862" class="m" textLength="526">02.11.2007 1:42:46 com.sun.facelets.tag.jsf.ComponentRule warnAttr</text>
<text x="236" y="879" class="m">WARNING: /pages/panel_menu.xhtml @27,75 iconCollapsedTopPosition="right" Property 'iconCollapsedTopPosition' is not on type: org.richfaces.comp</text>
<text x="236" y="896" class="m" textLength="365">TreeRendererBase.encodeAjaxChildren()[artist1]</text>
<text x="236" y="913" class="m" textLength="365">TreeRendererBase.encodeAjaxChildren()[artist1]</text>
<text x="236" y="930" class="m" textLength="365">TreeRendererBase.encodeAjaxChildren()[artist1]</text>
<text x="236" y="947" class="m" textLength="365">TreeRendererBase.encodeAjaxChildren()[artist1]</text>
<rect x="1377" y="850" width="18" height="125" fill="#fff"/>
<rect x="1378" y="850" width="15" height="124" fill="#f5f5f8"/>
<use href="#bU" x="1377" y="850"/><use href="#bD" x="1377" y="957"/>
<rect x="1377.500" y="947.500" width="15" height="10" rx="2" fill="url(#gV)" stroke="#a2a2ae"/>
<rect x="234" y="975" width="1160" height="17" fill="url(#gTh)"/>
<use href="#bL" x="235" y="976"/><use href="#bR" x="1360" y="976"/>
<rect x="253.500" y="975.500" width="238" height="15" rx="2" fill="url(#gH)" stroke="#a2a2ae"/><use href="#hg" x="369" y="980"/>

<!-- status -->
<use href="#grip" x="9" y="998"/><use href="#grip" x="1141" y="998"/>
<rect x="24.500" y="1003.500" width="5" height="10" fill="#fff" stroke="#6a7a8a"/><rect x="24" y="1003" width="6" height="3" fill="#5a8ac0"/><path d="M34.500 1000V1006M31.500 1003H37.500" stroke="#d8a020" stroke-width="1.300"/>
<path d="M885.500 997V1017M969.500 997V1017M1053.500 997V1017" stroke="#a8a8b0"/>
<text x="892" y="1011" textLength="39">Writable</text><text x="976" y="1011" textLength="60">Smart Insert</text><text x="1060" y="1011" textLength="21">1 : 1</text>

<!-- taskbar -->
<rect x="0" y="1020" width="1254" height="1" fill="#80809c"/>
<rect x="0" y="1021" width="1254" height="3" fill="#fff"/>
<path d="M0 1021H92Q95 1021 95 1024H0Z" fill="#58c060"/><path d="M0 1020.500H92" stroke="#208a30"/>
<g fill="#a4a4b4"><rect x="108" y="1022" width="122" height="2"/><rect x="233" y="1022" width="122" height="2"/><rect x="358" y="1022" width="122" height="2"/><rect x="483" y="1022" width="122" height="2"/><rect x="608" y="1022" width="122" height="2"/><rect x="733" y="1022" width="122" height="2"/><rect x="858" y="1022" width="125" height="2"/><rect x="986" y="1022" width="122" height="2"/><rect x="1111" y="1022" width="97" height="2"/></g>
</svg>
</body></html>
